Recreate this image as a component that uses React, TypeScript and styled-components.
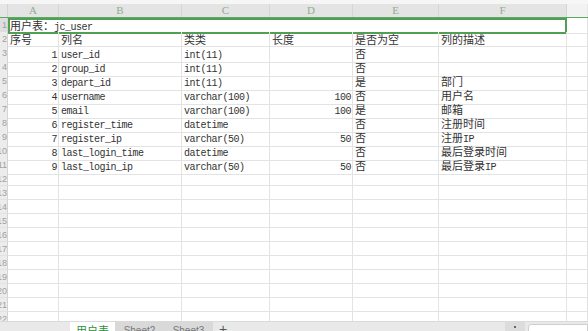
import styled, {createGlobalStyle} from 'styled-components'

const GlobalStyle = createGlobalStyle`
  html, body {
    margin: 0;
    padding: 0;
    background: #fff;
    overflow: hidden;
  }
`

const COLS = '8px 51px 123px 88px 83px 86px 128px 1fr'
const LETTERS = ['A', 'B', 'C', 'D', 'E', 'F']

const rows = [
  ['1', 'user_id', 'int(11)', '', '否', ''],
  ['2', 'group_id', 'int(11)', '', '否', ''],
  ['3', 'depart_id', 'int(11)', '', '是', '部门'],
  ['4', 'username', 'varchar(100)', '100', '否', '用户名'],
  ['5', 'email', 'varchar(100)', '100', '是', '邮箱'],
  ['6', 'register_time', 'datetime', '', '否', '注册时间'],
  ['7', 'register_ip', 'varchar(50)', '50', '否', '注册IP'],
  ['8', 'last_login_time', 'datetime', '', '否', '最后登录时间'],
  ['9', 'last_login_ip', 'varchar(50)', '50', '否', '最后登录IP'],
]

const TOTAL_ROWS = 23

// split text into CJK / latin runs so latin keeps the narrow half-width look
const Mixed = ({text}: {text: string}) => {
  const parts = text.split(/([\u3000-\u9fff\uff00-\uffef]+)/).filter(Boolean)
  return (
    <>
      {parts.map((p, i) =>
        /[\u3000-\u9fff\uff00-\uffef]/.test(p) ? (
          <Han key={i}>{p}</Han>
        ) : (
          <Latin key={i}>{p}</Latin>
        ),
      )}
    </>
  )
}

const App = () => {
  const extra = TOTAL_ROWS - 2 - rows.length

  return (
    <Screen>
      <GlobalStyle />
      <TopStrip />
      <Sheet>
        <HeadRow>
          <Corner />
          {LETTERS.map((l) => (
            <ColHead key={l} $active>
              {l}
            </ColHead>
          ))}
          <ColHead />
        </HeadRow>

        <Row>
          <RowHead $active>1</RowHead>
          <Selected>
            <Mixed text="用户表：jc_user" />
          </Selected>
          <Cell />
        </Row>

        <Row>
          <RowHead>2</RowHead>
          {['序号', '列名', '类类', '长度', '是否为空', '列的描述'].map((t) => (
            <Cell key={t}>
              <Mixed text={t} />
            </Cell>
          ))}
          <Cell />
        </Row>

        {rows.map((r, i) => (
          <Row key={r[1]}>
            <RowHead>{i + 3}</RowHead>
            <Cell $right>
              <Mixed text={r[0]} />
            </Cell>
            <Cell>
              <Mixed text={r[1]} />
            </Cell>
            <Cell>
              <Mixed text={r[2]} />
            </Cell>
            <Cell $right>
              <Mixed text={r[3]} />
            </Cell>
            <Cell>
              <Mixed text={r[4]} />
            </Cell>
            <Cell>
              <Mixed text={r[5]} />
            </Cell>
            <Cell />
          </Row>
        ))}

        {Array.from({length: extra}).map((_, i) => (
          <Row key={'e' + i}>
            <RowHead>{i + 3 + rows.length}</RowHead>
            {LETTERS.map((l) => (
              <Cell key={l} />
            ))}
            <Cell />
          </Row>
        ))}
      </Sheet>

      <TabBar>
        <TabSpacer />
        <Tab $active>
          <Mixed text="用户表" />
        </Tab>
        <Tab>Sheet2</Tab>
        <Tab>Sheet3</Tab>
        <AddTab>+</AddTab>
        <TabFill />
        <ScrollBtn>
          <Dot />
        </ScrollBtn>
        <ZoomBox />
      </TabBar>
    </Screen>
  )
}

export default App

const Screen = styled.div`
  width: 588px;
  height: 331px;
  display: flex;
  flex-direction: column;
  overflow: hidden;
  background: #fff;
  color: #3a3a3a;
`

const TopStrip = styled.div`
  height: 4px;
  flex: none;
  background: #f6f6f6;
`

const Sheet = styled.div`
  height: 317px;
  flex: none;
  overflow: hidden;
`

const Row = styled.div`
  display: grid;
  grid-template-columns: ${COLS};
  height: 14px;
`

const HeadRow = styled(Row)`
  height: 13px;
  border-bottom: 1px solid #5fa864;
`

const Corner = styled.div`
  background: #e6e6e6;
  border-right: 1px solid #d4d4d4;
`

const ColHead = styled.div<{$active?: boolean}>`
  background: ${(p) => (p.$active ? '#e4e4e4' : '#f2f2f2')};
  color: #8fae8f;
  font: 11px 'Liberation Serif', serif;
  line-height: 13px;
  text-align: center;
  border-right: 1px solid ${(p) => (p.$active ? '#d6d6d6' : '#e6e6e6')};
`

const RowHead = styled.div<{$active?: boolean}>`
  background: ${(p) => (p.$active ? '#dedede' : '#ececec')};
  color: #a0a0a0;
  font: 9px 'Liberation Sans', sans-serif;
  line-height: 14px;
  text-align: right;
  padding-right: 0;
  margin-right: 0;
  overflow: hidden;
  white-space: nowrap;
  text-indent: -3px;
  border-right: 1px solid #d4d4d4;
  border-bottom: 1px solid #e2e2e2;
  box-sizing: border-box;
`

const Cell = styled.div<{$right?: boolean}>`
  box-sizing: border-box;
  border-right: 1px solid #e3e3e3;
  border-bottom: 1px solid #e3e3e3;
  padding: 0 ${(p) => (p.$right ? '1px' : '0')} 0 ${(p) => (p.$right ? '0' : '2px')};
  text-align: ${(p) => (p.$right ? 'right' : 'left')};
  line-height: 13px;
  white-space: nowrap;
`

const Selected = styled(Cell)`
  grid-column: span 6;
  border: none;
  box-shadow: inset 0 0 0 2px #4f9f55;
  padding-left: 2px;
  line-height: 14px;
`

const Han = styled.span`
  font: 11px 'Noto Sans CJK SC', sans-serif;
  line-height: 13px;
  color: #333;
`

const Latin = styled.span`
  font: 10px 'Liberation Mono', monospace;
  line-height: 13px;
  letter-spacing: -0.5px;
  color: #333;
`

const TabBar = styled.div`
  height: 20px;
  flex: none;
  display: flex;
  align-items: stretch;
  background: #e9e9e9;
  border-top: 1px solid #dadada;
  font: 10px 'Liberation Sans', sans-serif;
`

const TabSpacer = styled.div`
  width: 70px;
  flex: none;
`

const Tab = styled.div<{$active?: boolean}>`
  width: ${(p) => (p.$active ? '45px' : '49px')};
  flex: none;
  text-align: center;
  padding-top: 2px;
  line-height: 13px;
  background: ${(p) => (p.$active ? '#fff' : '#d9d9d9')};
  color: ${(p) => (p.$active ? '#2f8f3c' : '#777')};

  span {
    color: inherit;
  }
`

const AddTab = styled.div`
  width: 20px;
  text-align: center;
  font-size: 14px;
  line-height: 14px;
  color: #555;
`

const TabFill = styled.div`
  flex: 1;
`

const ScrollBtn = styled.div`
  width: 20px;
  flex: none;
  background: #dcdcdc;
  display: flex;
  justify-content: center;
  padding-top: 4px;
`

const Dot = styled.div`
  width: 2px;
  height: 2px;
  background: #666;
`

const ZoomBox = styled.div`
  width: 58px;
  flex: none;
  margin: 2px 0 0 3px;
  background: #fff;
  border: 1px solid #cfcfcf;
  border-radius: 3px 0 0 0;
`
